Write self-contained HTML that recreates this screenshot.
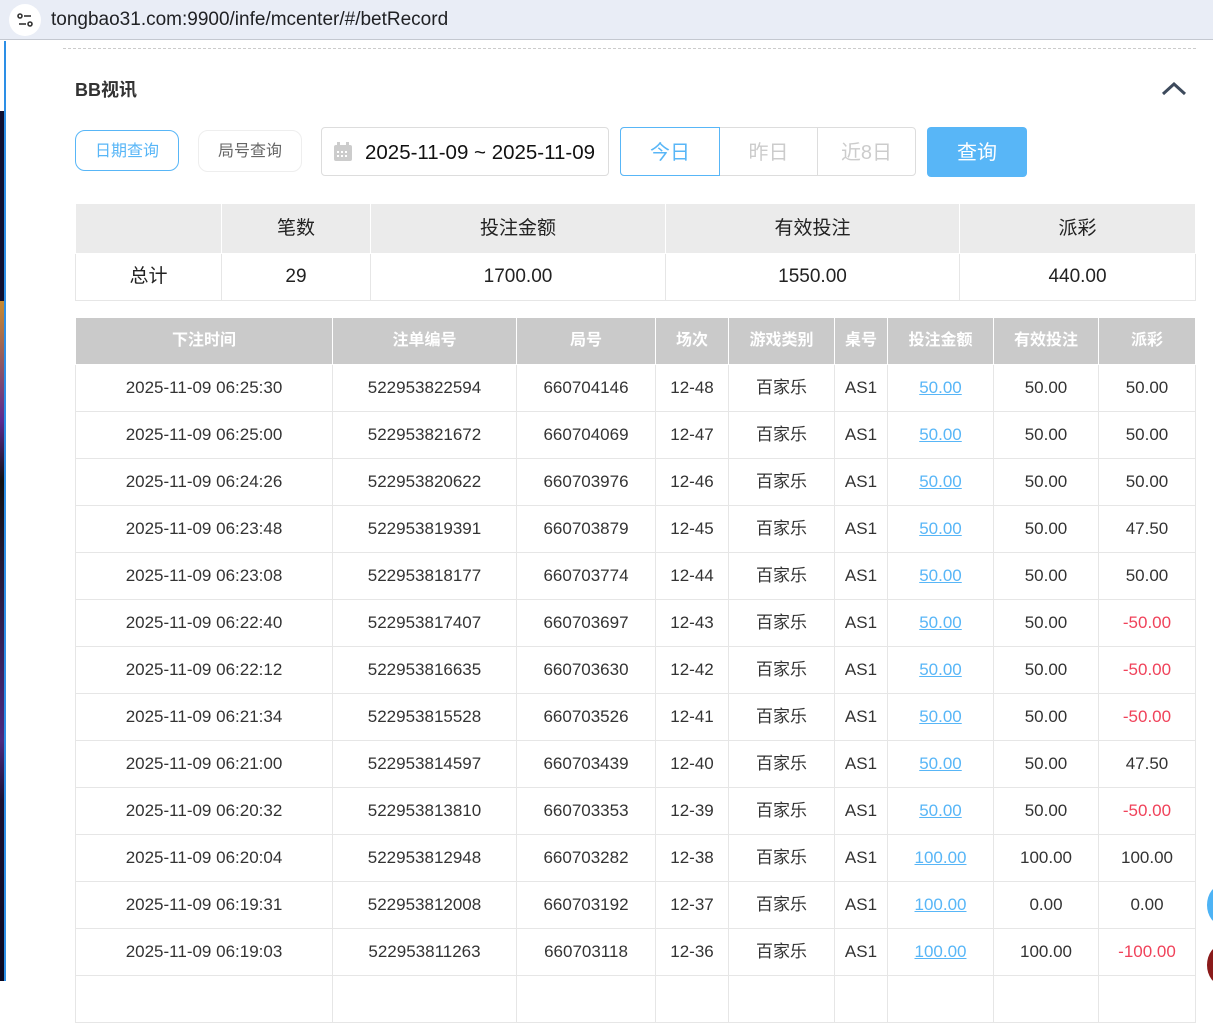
<!DOCTYPE html>
<html><head><meta charset="utf-8"><style>
*{margin:0;padding:0;box-sizing:border-box}
body{width:1213px;height:981px;overflow:hidden;background:#fff;font-family:"Liberation Sans","Noto Sans CJK SC",sans-serif;position:relative}
.bar{position:absolute;left:0;top:0;width:1213px;height:40px;background:#e9edf6;border-bottom:1px solid #c4c8d0}
.bar .ic{position:absolute;left:9px;top:4px;width:32px;height:32px;border-radius:50%;background:#fff}
.bar .url{position:absolute;left:51px;top:9px;font-size:19px;color:#202124}
.side{position:absolute;left:0;top:41px;width:4px;height:940px;background:linear-gradient(#fff 0,#fff 70px,#101030 70px,#101030 260px,#c88a30 260px,#5a2a90 380px,#111 440px,#4a2a80 700px,#1a1030 760px,#0a0820 940px)}
.sideb{position:absolute;left:4px;top:41px;width:2px;height:940px;background:#2d8fe6}
.dash{position:absolute;left:63px;top:48px;width:1133px;border-top:1px dashed #ccc}
.title{position:absolute;left:75px;top:79px;font-size:18px;font-weight:bold;color:#333;line-height:22px}
.btn{position:absolute;border-radius:10px;font-size:16px;text-align:center}
.t{position:absolute;border-collapse:collapse;table-layout:fixed}
.t td{text-align:center;border:1px solid #e6e6e6;color:#222;line-height:22px;vertical-align:middle}
.sum td{font-size:19px}
.sum tr.h td{background:#ebebeb;height:50px;border-color:#fff}
.sum tr.b td{height:47px}
.main td{font-size:17px;height:47px;color:#333}
.main tr.h td{background:#cacaca;color:#fff;font-weight:bold;height:47px;border-color:#fff;font-size:16px}
.main td.lk{color:#58b6f7;text-decoration:underline}
.main td.neg{color:#f0425a}
</style></head><body>
<div class="bar"><div class="ic"><svg width="32" height="32"><circle cx="11" cy="12" r="2" fill="none" stroke="#333" stroke-width="1.6"/><line x1="15" y1="12" x2="22" y2="12" stroke="#333" stroke-width="1.6"/><line x1="10" y1="20" x2="17" y2="20" stroke="#333" stroke-width="1.6"/><circle cx="21" cy="20" r="2" fill="none" stroke="#333" stroke-width="1.6"/></svg></div><div class="url">tongbao31.com:9900/infe/mcenter/#/betRecord</div></div>
<div class="side"></div><div class="sideb"></div>
<div class="dash"></div>
<div class="title">BB视讯</div>
<svg style="position:absolute;left:1161px;top:82px" width="26" height="14"><path d="M2 12 L13 2 L24 12" fill="none" stroke="#3d4a5c" stroke-width="3"/></svg>
<div class="btn" style="left:75px;top:130px;width:104px;height:41px;border:1px solid #58b6f7;color:#58b6f7;line-height:41px">日期查询</div>
<div class="btn" style="left:198px;top:130px;width:104px;height:42px;border:1px solid #eee;color:#666;line-height:42px">局号查询</div>
<div style="position:absolute;left:321px;top:127px;width:288px;height:49px;border:1px solid #ddd;border-radius:4px">
<svg style="position:absolute;left:11px;top:14px" width="20" height="20"><rect x="1" y="3" width="18" height="16" rx="2" fill="#ccc"/><rect x="4" y="0" width="3" height="5" fill="#ccc"/><rect x="13" y="0" width="3" height="5" fill="#ccc"/><g fill="#fff"><rect x="4" y="9" width="2" height="2"/><rect x="8" y="9" width="2" height="2"/><rect x="12" y="9" width="2" height="2"/><rect x="4" y="13" width="2" height="2"/><rect x="8" y="13" width="2" height="2"/><rect x="12" y="13" width="2" height="2"/></g></svg>
<div style="position:absolute;left:43px;top:13px;font-size:20.5px;color:#111;line-height:24px">2025-11-09 ~ 2025-11-09</div></div>
<div style="position:absolute;left:620px;top:127px;width:296px;height:49px;border:1px solid #ddd;border-radius:4px;font-size:20px;color:#ccc">
<div style="position:absolute;left:-1px;top:-1px;width:100px;height:49px;border:1px solid #58b6f7;border-radius:4px 0 0 4px;color:#58b6f7;text-align:center;line-height:50px">今日</div>
<div style="position:absolute;left:99px;top:0;width:98px;height:47px;border-right:1px solid #ddd;text-align:center;line-height:50px">昨日</div>
<div style="position:absolute;left:197px;top:0;width:97px;height:47px;text-align:center;line-height:50px">近8日</div></div>
<div style="position:absolute;left:927px;top:127px;width:100px;height:50px;background:#58b6f7;border-radius:4px;color:#fff;font-size:20px;text-align:center;line-height:52px">查询</div>
<table class="t sum" style="left:75px;top:203px;width:1120px">
<colgroup><col style="width:146px"><col style="width:149px"><col style="width:295px"><col style="width:294px"><col style="width:236px"></colgroup>
<tr class="h"><td></td><td>笔数</td><td>投注金额</td><td>有效投注</td><td>派彩</td></tr>
<tr class="b"><td>总计</td><td>29</td><td>1700.00</td><td>1550.00</td><td>440.00</td></tr></table>
<table class="t main" style="left:75px;top:317px;width:1120px">
<colgroup><col style="width:257px"><col style="width:184px"><col style="width:139px"><col style="width:73px"><col style="width:106px"><col style="width:53px"><col style="width:106px"><col style="width:105px"><col style="width:97px"></colgroup>
<tr class="h"><td>下注时间</td><td>注单编号</td><td>局号</td><td>场次</td><td>游戏类别</td><td>桌号</td><td>投注金额</td><td>有效投注</td><td>派彩</td></tr>
<tr><td>2025-11-09 06:25:30</td><td>522953822594</td><td>660704146</td><td>12-48</td><td>百家乐</td><td>AS1</td><td class="lk">50.00</td><td>50.00</td><td>50.00</td></tr>
<tr><td>2025-11-09 06:25:00</td><td>522953821672</td><td>660704069</td><td>12-47</td><td>百家乐</td><td>AS1</td><td class="lk">50.00</td><td>50.00</td><td>50.00</td></tr>
<tr><td>2025-11-09 06:24:26</td><td>522953820622</td><td>660703976</td><td>12-46</td><td>百家乐</td><td>AS1</td><td class="lk">50.00</td><td>50.00</td><td>50.00</td></tr>
<tr><td>2025-11-09 06:23:48</td><td>522953819391</td><td>660703879</td><td>12-45</td><td>百家乐</td><td>AS1</td><td class="lk">50.00</td><td>50.00</td><td>47.50</td></tr>
<tr><td>2025-11-09 06:23:08</td><td>522953818177</td><td>660703774</td><td>12-44</td><td>百家乐</td><td>AS1</td><td class="lk">50.00</td><td>50.00</td><td>50.00</td></tr>
<tr><td>2025-11-09 06:22:40</td><td>522953817407</td><td>660703697</td><td>12-43</td><td>百家乐</td><td>AS1</td><td class="lk">50.00</td><td>50.00</td><td class="neg">-50.00</td></tr>
<tr><td>2025-11-09 06:22:12</td><td>522953816635</td><td>660703630</td><td>12-42</td><td>百家乐</td><td>AS1</td><td class="lk">50.00</td><td>50.00</td><td class="neg">-50.00</td></tr>
<tr><td>2025-11-09 06:21:34</td><td>522953815528</td><td>660703526</td><td>12-41</td><td>百家乐</td><td>AS1</td><td class="lk">50.00</td><td>50.00</td><td class="neg">-50.00</td></tr>
<tr><td>2025-11-09 06:21:00</td><td>522953814597</td><td>660703439</td><td>12-40</td><td>百家乐</td><td>AS1</td><td class="lk">50.00</td><td>50.00</td><td>47.50</td></tr>
<tr><td>2025-11-09 06:20:32</td><td>522953813810</td><td>660703353</td><td>12-39</td><td>百家乐</td><td>AS1</td><td class="lk">50.00</td><td>50.00</td><td class="neg">-50.00</td></tr>
<tr><td>2025-11-09 06:20:04</td><td>522953812948</td><td>660703282</td><td>12-38</td><td>百家乐</td><td>AS1</td><td class="lk">100.00</td><td>100.00</td><td>100.00</td></tr>
<tr><td>2025-11-09 06:19:31</td><td>522953812008</td><td>660703192</td><td>12-37</td><td>百家乐</td><td>AS1</td><td class="lk">100.00</td><td>0.00</td><td>0.00</td></tr>
<tr><td>2025-11-09 06:19:03</td><td>522953811263</td><td>660703118</td><td>12-36</td><td>百家乐</td><td>AS1</td><td class="lk">100.00</td><td>100.00</td><td class="neg">-100.00</td></tr>
<tr><td></td><td></td><td></td><td></td><td></td><td></td><td></td><td></td><td></td></tr>
</table>
<div style="position:absolute;left:1207px;top:885px;width:30px;height:40px;border-radius:50%;background:#4db3f5"></div>
<div style="position:absolute;left:1207px;top:945px;width:30px;height:40px;border-radius:50%;background:#8a1a1a"></div>
</body></html>
